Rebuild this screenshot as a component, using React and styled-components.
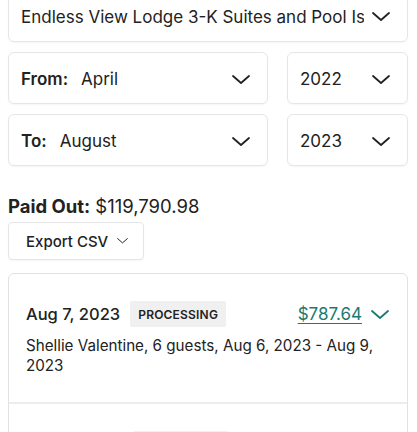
import React from "react";
import styled, { createGlobalStyle } from "styled-components";

const GlobalStyle = createGlobalStyle`
  html, body {
    margin: 0;
    padding: 0;
    background: #ffffff;
  }
  body {
    font-family: "Inter", "Noto Sans", sans-serif;
    color: #222222;
    overflow: hidden;
  }
`;

const Page = styled.div`
  width: 417px;
  height: 432px;
  padding: 0 9px 0 8px;
  box-sizing: border-box;
  display: flex;
  flex-direction: column;
  overflow: hidden;

  & > * {
    flex-shrink: 0;
  }
`;

const Filters = styled.div`
  display: flex;
  flex-direction: column;
  gap: 10px;
  margin-top: -10px;
`;

const Row = styled.div`
  display: grid;
  grid-template-columns: 1fr 121px;
  gap: 19px;
`;

const Select = styled.div`
  height: 52px;
  box-sizing: border-box;
  border: 1px solid #e6e6e6;
  border-radius: 6px;
  box-shadow: 0 1px 2px rgba(0, 0, 0, 0.04);
  display: flex;
  align-items: center;
  padding: ${(p) => (p.$top ? "1px 17px 0 12px" : "2px 17px 0 12px")};
  gap: 8px;
  font-size: 17px;
  color: #222;
  overflow: hidden;
`;

const SelectText = styled.span`
  flex: 1;
  white-space: nowrap;
  overflow: hidden;
`;

const Label = styled.span`
  font-weight: 600;
  margin-right: 13px;
`;

const Chevron = ({ size = 18, color = "#222", width = 1.8 }) => (
  <svg
    width={size}
    height={size / 2}
    viewBox="0 0 18 9"
    fill="none"
    style={{ flexShrink: 0 }}
  >
    <path
      d="M1 1 L9 8 L17 1"
      stroke={color}
      strokeWidth={width}
      strokeLinecap="round"
      strokeLinejoin="round"
    />
  </svg>
);

const Total = styled.div`
  margin-top: 28px;
  font-size: 18.5px;
  line-height: 24px;
  color: #222;
`;

const TotalLabel = styled.span`
  font-weight: 700;
  margin-right: 5px;
`;

const ExportButton = styled.button`
  margin-top: 4px;
  align-self: flex-start;
  width: 136px;
  height: 38px;
  box-sizing: border-box;
  background: #fff;
  border: 1px solid #e6e6e6;
  border-radius: 4px;
  box-shadow: 0 1px 2px rgba(0, 0, 0, 0.04);
  display: flex;
  align-items: center;
  gap: 9px;
  padding: 0 0 0 17px;
  font-family: inherit;
  font-size: 15px;
  font-weight: 500;
  color: #222;
`;

const Card = styled.div`
  margin-top: 13px;
  border: 1px solid #e2e2e2;
  border-radius: 6px;
  display: flex;
  flex-direction: column;
`;

const Payout = styled.div`
  padding: 27px 18px 26px 17px;
  border-bottom: ${(p) => (p.$last ? "none" : "2px solid #ececec")};
`;

const PayoutHead = styled.div`
  display: flex;
  align-items: center;
  height: 26px;
`;

const PayoutDate = styled.span`
  font-size: 16.5px;
  font-weight: 500;
  color: #222;
  margin-right: 10px;
`;

const Badge = styled.span`
  background: #f0f0f0;
  border-radius: 2px;
  height: 26px;
  padding: 0 8px;
  display: flex;
  align-items: center;
  font-size: 12px;
  font-weight: 600;
  letter-spacing: 0.2px;
  color: #222;
`;

const Amount = styled.a`
  margin-left: auto;
  margin-right: 9px;
  font-size: 17px;
  color: #1a7a70;
  text-decoration: underline;
  text-underline-offset: 3px;
  text-decoration-thickness: 1px;
`;

const Details = styled.div`
  margin-top: 9px;
  font-size: 15.2px;
  line-height: 20px;
  color: #222;
`;

const payouts = [
  {
    date: "Aug 7, 2023",
    status: "PROCESSING",
    amount: "$787.64",
    details: "Shellie Valentine, 6 guests, Aug 6, 2023 - Aug 9, 2023",
  },
  {
    date: "Aug 3, 2023",
    status: "PROCESSING",
    amount: "$1,024.10",
    details: "Guest reservation",
  },
];

function App() {
  return (
    <>
      <GlobalStyle />
      <Page>
        <Filters>
          <Select $top>
            <SelectText>Endless View Lodge 3-K Suites and Pool Is Close to Town</SelectText>
            <Chevron />
          </Select>
          <Row>
            <Select>
              <SelectText>
                <Label>From:</Label>April
              </SelectText>
              <Chevron />
            </Select>
            <Select>
              <SelectText>2022</SelectText>
              <Chevron />
            </Select>
          </Row>
          <Row>
            <Select>
              <SelectText>
                <Label>To:</Label>August
              </SelectText>
              <Chevron />
            </Select>
            <Select>
              <SelectText>2023</SelectText>
              <Chevron />
            </Select>
          </Row>
        </Filters>

        <Total>
          <TotalLabel>Paid Out:</TotalLabel>$119,790.98
        </Total>
        <ExportButton>
          Export CSV
          <Chevron size={11} width={1.6} />
        </ExportButton>

        <Card>
          {payouts.map((p, i) => (
            <Payout key={i} $last={i === payouts.length - 1}>
              <PayoutHead>
                <PayoutDate>{p.date}</PayoutDate>
                <Badge>{p.status}</Badge>
                <Amount>{p.amount}</Amount>
                <Chevron color="#1a7a70" />
              </PayoutHead>
              <Details>{p.details}</Details>
            </Payout>
          ))}
        </Card>
      </Page>
    </>
  );
}

export default App;
